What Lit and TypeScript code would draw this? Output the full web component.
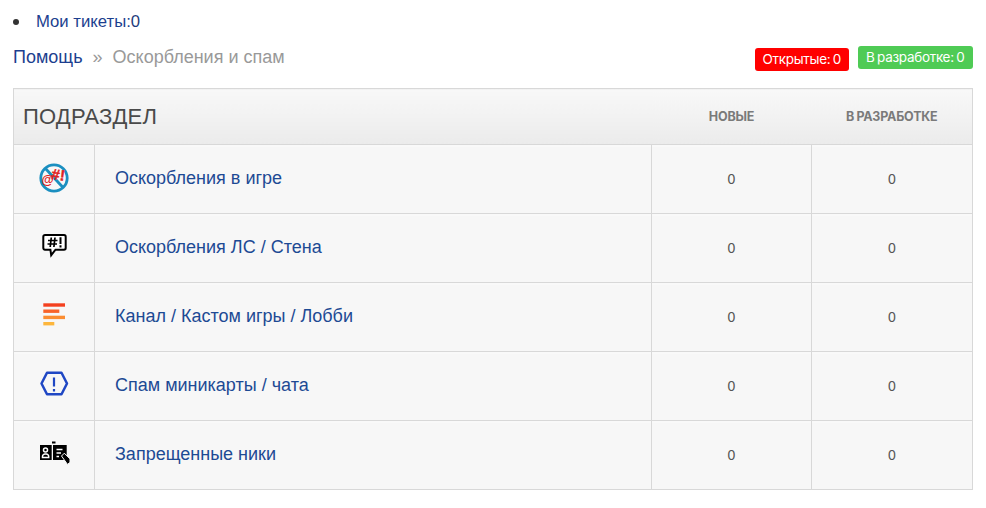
import { LitElement, html, css, svg } from "lit";
import { customElement } from "lit/decorators.js";

const icons = [
  svg`<svg class="ic" width="32" height="32" viewBox="0 0 32 32"><circle cx="16" cy="16" r="13.200" fill="none" stroke="#1b8fc0" stroke-width="2.800"/><path d="M7 6 25.500 26" stroke="#1b8fc0" stroke-width="2.800"/><text x="3.500" y="21.500" class="at">@</text><text x="13.500" y="18" class="hash" transform="rotate(8 20 13)">#!</text></svg>`,
  svg`<svg class="ic" width="32" height="32" viewBox="0 0 32 32"><path d="M7 4h19a1.700 1.700 0 0 1 1.700 1.700v11.300a1.700 1.700 0 0 1-1.700 1.700H17.500l-4.300 5.500-.8-5.500H7a1.700 1.700 0 0 1-1.700-1.700V5.700A1.700 1.700 0 0 1 7 4z" fill="#fff" stroke="#000" stroke-width="2"/><path d="M13.300 6.500l-1.100 9.500M17 6.500l-1.100 9.500M10 9.500h9.500M9.500 13h9.500" stroke="#000" stroke-width="1.700" fill="none"/><path d="M22.500 6.300v6.700M22.500 14.300v2.200" stroke="#000" stroke-width="2"/></svg>`,
  svg`<svg class="ic" width="32" height="32" viewBox="0 0 32 32"><rect x="5.300" y="3.300" width="21.700" height="3.400" fill="#f4401f"/><rect x="5.300" y="9.500" width="16" height="3.400" fill="#f8632a"/><rect x="5.300" y="15.700" width="21.700" height="3.400" fill="#fb8d32"/><rect x="5.300" y="22" width="11" height="3.400" fill="#fdb63c"/></svg>`,
  svg`<svg class="ic" width="32" height="32" viewBox="0 0 32 32"><path d="M9 3.800h14.500L29 14.500l-5.500 10.700H9L3.500 14.500z" fill="none" stroke="#1f47c4" stroke-width="2.500" stroke-linejoin="round"/><path d="M16 8.500v9M16 20v2.500" stroke="#1f47c4" stroke-width="2.200"/></svg>`,
  svg`<svg class="ic" width="32" height="32" viewBox="0 0 32 32"><rect x="14" y="3.500" width="3.500" height="2" fill="#000"/><rect x="2" y="7" width="11.700" height="15" fill="#000"/><rect x="15" y="7" width="13.700" height="15" fill="#000"/><circle cx="7.500" cy="12" r="2" fill="none" stroke="#fff" stroke-width="1.500"/><path d="M4.500 19.500v-1a2.500 2.500 0 0 1 2.500-2.500h1.200a2.500 2.500 0 0 1 2.500 2.500v1z" fill="none" stroke="#fff" stroke-width="1.500"/><path d="M18.500 11.500h6M18.500 15h4.500M18.500 18.500h2.500" stroke="#fff" stroke-width="1.500"/><path d="M23.500 18l2.800-2.800 5.700 5.700v3.500l-2.500 2z" fill="#000" stroke="#fff" stroke-width="1"/></svg>`,
];

const rows = [
  "Оскорбления в игре",
  "Оскорбления ЛС / Стена",
  "Канал / Кастом игры / Лобби",
  "Спам миникарты / чата",
  "Запрещенные ники",
];

@customElement("app-root")
export class AppRoot extends LitElement {
  static styles = css`
    :host {
      display: block;
      width: 986px;
      height: 508px;
      background: #fff;
      font-family: "Liberation Sans", Arial, sans-serif;
      color: #444;
      box-sizing: border-box;
      padding: 0 13px;
      overflow: hidden;
    }
    .tickets {
      display: flex;
      align-items: center;
      gap: 17px;
      height: 43px;
      box-sizing: border-box;
      font-size: 16.700px;
      color: #1e3c7c;
    }
    .tickets::before {
      content: "";
      width: 6px;
      height: 6px;
      border-radius: 50%;
      background: #333;
    }
    .tickets a { color: #1d3f8f; text-decoration: none; }
    .bar {
      display: flex;
      justify-content: space-between;
      align-items: flex-start;
      height: 45px;
    }
    .crumbs {
      font-size: 18px;
      line-height: 28px;
      color: #999;
      display: flex;
    }
    .crumbs a { color: #1d3f8f; text-decoration: none; }
    .crumbs .sep { margin: 0 10px; }
    .badges { display: flex; align-items: flex-start; gap: 9px; margin-top: 3px; }
    .badge {
      color: #fff;
      font-family: Inter, Roboto, sans-serif;
      font-size: 13.500px;
      line-height: 23px;
      height: 23px;
      border-radius: 3px;
      letter-spacing: -0.3px;
      word-spacing: -1px;
    }
    .red { background: #ff0000; margin-top: 2px; padding: 0 7.500px; }
    .green { background: #4fcb55; padding: 0 8.500px; }
    table {
      width: 960px;
      border-collapse: collapse;
      table-layout: fixed;
      border: 1px solid #d8d8d8;
    }
    th {
      height: 55px;
      padding: 0;
      background: linear-gradient(#f8f8f8, #ebebeb);
      border-bottom: 1px solid #d8d8d8;
      font-family: Inter, Roboto, sans-serif;
      font-size: 12.500px;
      font-weight: 700;
      color: #7a7a7a;
      text-transform: uppercase;
      text-align: center;
      letter-spacing: -0.2px;
      word-spacing: -0.5px;
    }
    th.main {
      font-family: "Liberation Sans", Arial, sans-serif;
      font-size: 22px;
      font-weight: 400;
      color: #4a4a4a;
      text-align: left;
      padding-left: 9px;
      letter-spacing: 0.2px;
      word-spacing: 0;
    }
    td {
      height: 69px;
      padding: 0 0 1px;
      box-sizing: border-box;
      background: #f7f7f7;
      border: 1px solid #d8d8d8;
      text-align: center;
      font-size: 14px;
      color: #555;
      box-shadow: inset 0 2px 0 #f9f9f9;
    }
    td.icon { line-height: 0; padding: 0 0 2px; }
    .ic { display: inline-block; }
    .at { font: 700 12.500px "Liberation Sans", sans-serif; fill: #e02020; }
    .hash { font: 700 15px "Liberation Sans", sans-serif; fill: #e02020; stroke: #e02020; stroke-width: 0.4px; }
    td.name { text-align: left; padding-left: 20px; font-size: 18px; }
    td.name a { color: #1d4a94; text-decoration: none; }
  `;

  render() {
    return html`
      <div class="tickets"><span><a href="#">Мои тикеты:</a>0</span></div>
      <div class="bar">
        <div class="crumbs"><a href="#">Помощь</a><span class="sep">»</span><span>Оскорбления и спам</span></div>
        <div class="badges">
          <span class="badge red">Открытые: 0</span>
          <span class="badge green">В разработке: 0</span>
        </div>
      </div>
      <table>
        <colgroup><col style="width:81px" /><col style="width:557px" /><col style="width:160px" /><col style="width:161px" /></colgroup>
        <thead>
          <tr>
            <th class="main" colspan="2">Подраздел</th>
            <th>Новые</th>
            <th>В разработке</th>
          </tr>
        </thead>
        <tbody>
          ${rows.map(
            (r, i) => html`<tr>
              <td class="icon">${icons[i]}</td>
              <td class="name"><a href="#">${r}</a></td>
              <td>0</td>
              <td>0</td>
            </tr>`
          )}
        </tbody>
      </table>
    `;
  }
}
